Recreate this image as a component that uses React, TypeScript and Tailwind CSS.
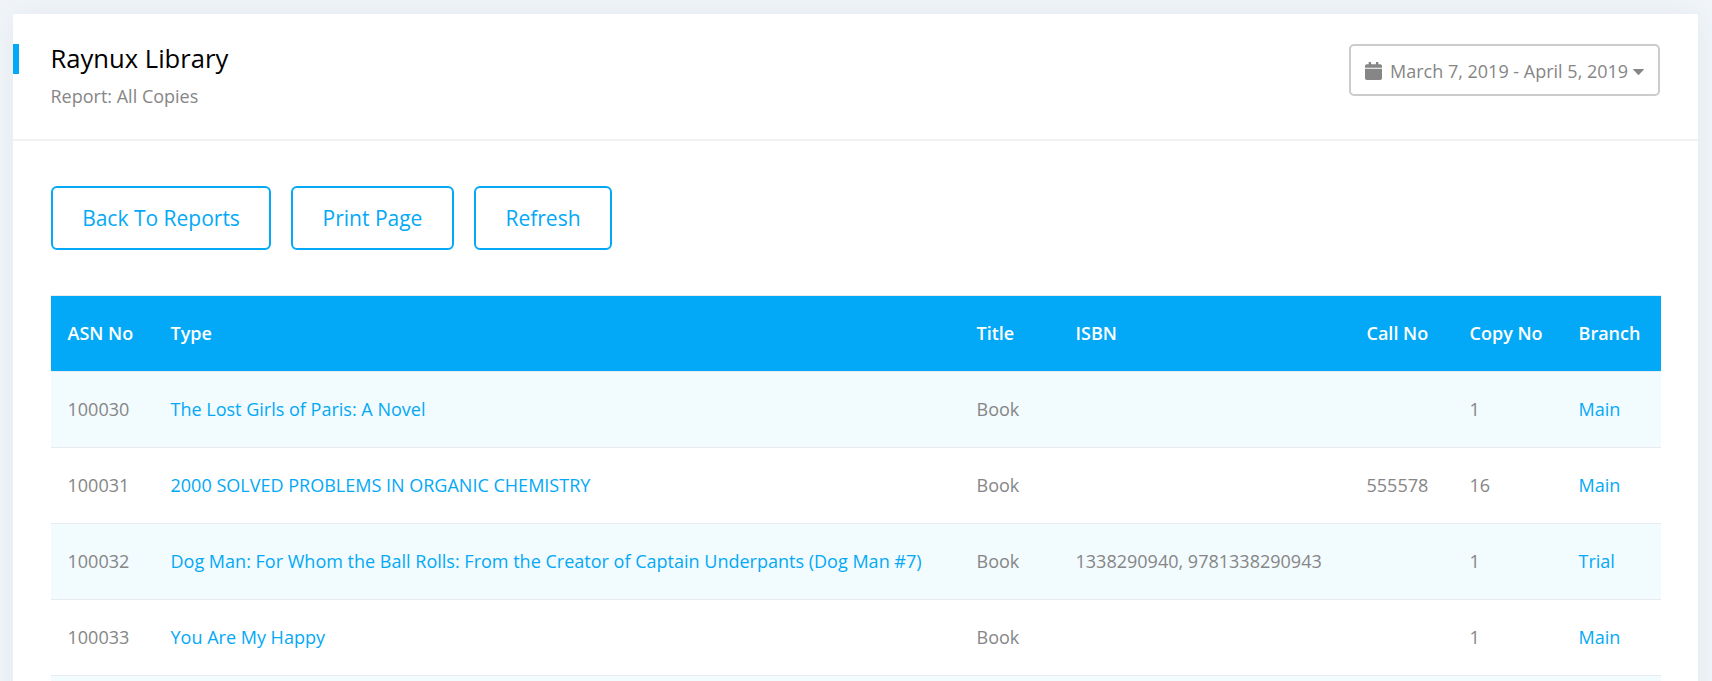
import React from "react";

type Row = { asn: string; name: string; kind: string; isbn: string; call: string; copy: string; branch: string };

const rows: Row[] = [
  { asn: "100030", name: "The Lost Girls of Paris: A Novel", kind: "Book", isbn: "", call: "", copy: "1", branch: "Main" },
  { asn: "100031", name: "2000 SOLVED PROBLEMS IN ORGANIC CHEMISTRY", kind: "Book", isbn: "", call: "555578", copy: "16", branch: "Main" },
  { asn: "100032", name: "Dog Man: For Whom the Ball Rolls: From the Creator of Captain Underpants (Dog Man #7)", kind: "Book", isbn: "1338290940, 9781338290943", call: "", copy: "1", branch: "Trial" },
  { asn: "100033", name: "You Are My Happy", kind: "Book", isbn: "", call: "", copy: "1", branch: "Main" },
  { asn: "", name: "", kind: "", isbn: "", call: "", copy: "", branch: "" },
];

const headings = ["ASN No", "Type", "Title", "ISBN", "Call No", "Copy No", "Branch"];
const grid = "grid grid-cols-[103px_806px_99px_291px_103px_109px_99px] items-center *:pl-[16.5px] *:whitespace-nowrap";

function Action({ label, size }: { label: string; size: string }) {
  return (
    <button className={`${size} h-16 rounded-md border-2 border-[#03a9f7] pt-0.5 text-[21px] text-[#03a9f7]`}>
      {label}
    </button>
  );
}

export default function App() {
  return (
    <div className="h-[681px] overflow-hidden bg-[#f1f5f9] pt-3.5 pl-[13px] font-['Open_Sans',sans-serif] text-[18px] text-[#868686]">
      <main className="h-[720px] w-[1685px] bg-white shadow-[0_0_28px_rgba(69,90,100,0.08)]">
        <header className="flex h-[127px] items-start justify-between border-b-2 border-[#f1f1f1] pt-[30px] pr-[38px]">
          <div className="flex items-start">
            <div className="h-[30px] w-1.5 bg-[#03a9f7]" />
            <div className="pl-[31.5px]">
              <h1 className="text-[25.6px] leading-[30px] text-black">Raynux Library</h1>
              <p className="mt-2.5 leading-6">Report: All Copies</p>
            </div>
          </div>
          <button className="flex h-[52px] w-[311px] items-center rounded-[5px] border-2 border-[#ccc] pt-0.5 pl-3.5 whitespace-nowrap">
            <svg viewBox="0 0 448 512" className="mr-2 h-[18px] w-[17px]" preserveAspectRatio="none" fill="currentColor">
              <path d="M0 464c0 26.500 21.500 48 48 48h352c26.500 0 48-21.500 48-48V192H0zM448 112v48H0v-48c0-26.500 21.500-48 48-48h48V12c0-6.600 5.400-12 12-12h40c6.600 0 12 5.400 12 12v52h128V12c0-6.600 5.400-12 12-12h40c6.600 0 12 5.400 12 12v52h48c26.500 0 48 21.500 48 48z" />
            </svg>
            <span>March 7, 2019 - April 5, 2019</span>
            <svg viewBox="0 0 11 6" className="mt-0.5 ml-[5px] h-1.5 w-[11px]" fill="currentColor">
              <path d="M0.600 0h9.800q0.900 0 0.300 0.700L6 5.700q-0.500 0.500-1 0L0.300 0.700Q-0.300 0 0.600 0z" />
            </svg>
          </button>
        </header>
        <div className="pt-[45px] pl-[38px]">
          <div className="flex gap-5">
            <Action label="Back To Reports" size="w-[220px]" />
            <Action label="Print Page" size="w-[163px]" />
            <Action label="Refresh" size="w-[138px]" />
          </div>
          <section className="mt-[45px] w-[1610px] text-[18.02px]">
            <div className={`${grid} h-[76px] border-t border-[#e9ecef] bg-[#03a9f7] font-semibold text-white`}>
              {headings.map((h) => (
                <div key={h}>{h}</div>
              ))}
            </div>
            {rows.map((r, i) => (
              <div key={i} className={`${grid} h-[76px] border-t border-[#e9ecef] ${i % 2 ? "bg-white" : "bg-[#f2fbfe]"}`}>
                <div>{r.asn}</div>
                <div className="text-[#03a9f7]">{r.name}</div>
                <div>{r.kind}</div>
                <div>{r.isbn}</div>
                <div>{r.call}</div>
                <div>{r.copy}</div>
                <div className="text-[#03a9f7]">{r.branch}</div>
              </div>
            ))}
          </section>
        </div>
      </main>
    </div>
  );
}
